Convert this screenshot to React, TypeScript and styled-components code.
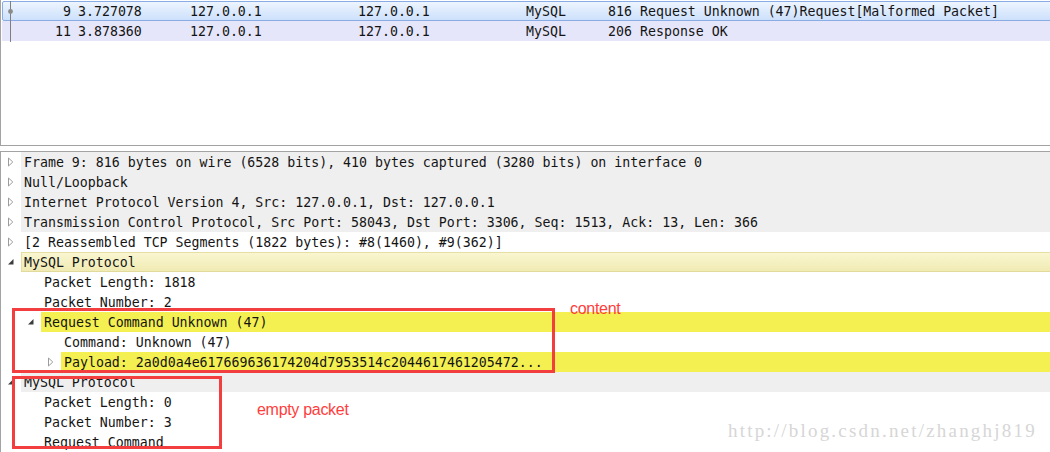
import React from 'react';
import styled, { createGlobalStyle, css } from 'styled-components';

const GlobalStyle = createGlobalStyle`
  html, body { margin: 0; padding: 0; background: #ffffff; }
  body { width: 1050px; height: 452px; overflow: hidden; }
`;

const MONO = `"DejaVu Sans Mono", "Liberation Mono", monospace`;

const Page = styled.div`
  position: relative;
  width: 1050px;
  height: 452px;
  overflow: hidden;
  background: #ffffff;
  font-family: ${MONO};
  color: #141414;
`;

/* ---------- packet list ---------- */

const PacketList = styled.section`
  box-sizing: border-box;
  height: 146px;
  border-left: 1px solid #a3a3a3;
  border-bottom: 1px solid #a3a3a3;
  padding: 1px 0 0 1px;
  overflow: hidden;
`;

const PacketRow = styled.div<{ $selected?: boolean }>`
  box-sizing: border-box;
  height: 20px;
  margin-right: -6px;
  display: grid;
  grid-template-columns: 14px 54px 119px 168px 168px 82px 32px 1fr;
  align-items: center;
  border: 1px solid transparent;
  font-size: 13.25px;
  white-space: pre;
  ${(p) =>
    p.$selected
      ? css`
          background: linear-gradient(#edf5ff, #cde0fb);
          border-color: #89ace4;
          border-radius: 2px;
        `
      : css`
          background: #e6e6fa;
        `}
`;

const Cell = styled.span<{ $right?: boolean; $pad?: number }>`
  display: block;
  overflow: hidden;
  text-align: ${(p) => (p.$right ? 'right' : 'left')};
  padding-left: ${(p) => p.$pad ?? 0}px;
`;

const RelatedMark = styled.svg`
  display: block;
  width: 14px;
  height: 21px;
  margin: -1px 0 -2px;
`;

function Related({ dot }: { dot?: boolean }) {
  return (
    <RelatedMark viewBox="0 0 14 21">
      <line x1="7.5" y1="0" x2="7.5" y2="21" stroke="#7f7f7f" strokeWidth="1" />
      {dot && <circle cx="7.5" cy="10.5" r="2.4" fill="#8a8a8a" />}
    </RelatedMark>
  );
}

type Packet = {
  no: string;
  time: string;
  src: string;
  dst: string;
  proto: string;
  len: string;
  info: string;
  selected?: boolean;
};

const packets: Packet[] = [
  {
    no: '9',
    time: '3.727078',
    src: '127.0.0.1',
    dst: '127.0.0.1',
    proto: 'MySQL',
    len: '816',
    info: 'Request Unknown (47)Request[Malformed Packet]',
    selected: true,
  },
  {
    no: '11',
    time: '3.878360',
    src: '127.0.0.1',
    dst: '127.0.0.1',
    proto: 'MySQL',
    len: '206',
    info: 'Response OK',
  },
];

const Splitter = styled.div`
  height: 5px;
  background: #ffffff;
`;

/* ---------- packet details tree ---------- */

type Tone = 'plain' | 'gray' | 'pale' | 'yellow';

const DetailPane = styled.section`
  border-top: 1px solid #a3a3a3;
  border-left: 1px solid #a3a3a3;
  font-size: 13.25px;
`;

const TreeRow = styled.div<{ $level: number }>`
  display: flex;
  height: 20px;
  padding-left: ${(p) => p.$level * 20}px;
`;

const Toggle = styled.span`
  flex: none;
  width: 20px;
  display: flex;
  align-items: center;
  justify-content: center;
`;

const toneStyles: Record<Tone, ReturnType<typeof css>> = {
  plain: css`
    background: transparent;
  `,
  gray: css`
    background: #efefef;
  `,
  pale: css`
    background: linear-gradient(#faf7d2, #f0eab2);
    box-shadow: inset 0 1px 0 #e6dfa4, inset 0 -1px 0 #e2da9a, inset 1px 0 0 #e6dfa4;
  `,
  yellow: css`
    background: #f4f051;
  `,
};

const Label = styled.div<{ $tone: Tone }>`
  flex: 1;
  display: flex;
  align-items: center;
  padding-left: 3px;
  white-space: pre;
  ${(p) => toneStyles[p.$tone]}
`;

const ArrowSvg = styled.svg`
  display: block;
`;

function CollapsedArrow() {
  return (
    <ArrowSvg width="6" height="10" viewBox="0 0 6 10">
      <polygon points="0.5,1 4.8,5 0.5,9" fill="#ffffff" stroke="#9c9c9c" strokeWidth="1" />
    </ArrowSvg>
  );
}

function ExpandedArrow() {
  return (
    <ArrowSvg width="6" height="10" viewBox="0 0 6 10">
      <polygon points="5.5,2 5.5,7.5 0,7.5" fill="#3c3c3c" />
    </ArrowSvg>
  );
}

type Node = {
  level: number;
  text: string;
  tone: Tone;
  arrow?: 'open' | 'closed';
};

const nodes: Node[] = [
  {
    level: 0,
    arrow: 'closed',
    tone: 'gray',
    text: 'Frame 9: 816 bytes on wire (6528 bits), 410 bytes captured (3280 bits) on interface 0',
  },
  { level: 0, arrow: 'closed', tone: 'gray', text: 'Null/Loopback' },
  {
    level: 0,
    arrow: 'closed',
    tone: 'gray',
    text: 'Internet Protocol Version 4, Src: 127.0.0.1, Dst: 127.0.0.1',
  },
  {
    level: 0,
    arrow: 'closed',
    tone: 'gray',
    text: 'Transmission Control Protocol, Src Port: 58043, Dst Port: 3306, Seq: 1513, Ack: 13, Len: 366',
  },
  {
    level: 0,
    arrow: 'closed',
    tone: 'plain',
    text: '[2 Reassembled TCP Segments (1822 bytes): #8(1460), #9(362)]',
  },
  { level: 0, arrow: 'open', tone: 'pale', text: 'MySQL Protocol' },
  { level: 1, tone: 'plain', text: 'Packet Length: 1818' },
  { level: 1, tone: 'plain', text: 'Packet Number: 2' },
  { level: 1, arrow: 'open', tone: 'yellow', text: 'Request Command Unknown (47)' },
  { level: 2, tone: 'plain', text: 'Command: Unknown (47)' },
  {
    level: 2,
    arrow: 'closed',
    tone: 'yellow',
    text: 'Payload: 2a0d0a4e617669636174204d7953514c2044617461205472...',
  },
  { level: 0, arrow: 'open', tone: 'gray', text: 'MySQL Protocol' },
  { level: 1, tone: 'plain', text: 'Packet Length: 0' },
  { level: 1, tone: 'plain', text: 'Packet Number: 3' },
  { level: 1, tone: 'plain', text: 'Request Command' },
];

/* ---------- annotations (drawn over the screenshot) ---------- */

const Callout = styled.div<{ $x: number; $y: number; $w: number; $h: number }>`
  position: absolute;
  box-sizing: border-box;
  left: ${(p) => p.$x}px;
  top: ${(p) => p.$y}px;
  width: ${(p) => p.$w}px;
  height: ${(p) => p.$h}px;
  border: 3px solid #f23e3e;
  pointer-events: none;
`;

const Note = styled.span<{ $x: number; $y: number }>`
  position: absolute;
  left: ${(p) => p.$x}px;
  top: ${(p) => p.$y}px;
  font-family: "Liberation Sans", Arial, sans-serif;
  font-size: 16px;
  line-height: 16px;
  letter-spacing: -0.3px;
  color: #ff3d3d;
  white-space: nowrap;
`;

const Watermark = styled.span`
  position: absolute;
  left: 728px;
  top: 421px;
  font-family: "Liberation Serif", "Times New Roman", serif;
  font-size: 19px;
  line-height: 20px;
  letter-spacing: 2.2px;
  color: #d6d6d6;
  white-space: nowrap;
`;

export default function App() {
  return (
    <Page>
      <GlobalStyle />
      <PacketList>
        {packets.map((p) => (
          <PacketRow key={p.no} $selected={p.selected}>
            <Related dot={p.selected} />
            <Cell $right>{p.no}</Cell>
            <Cell $pad={7}>{p.time}</Cell>
            <Cell>{p.src}</Cell>
            <Cell>{p.dst}</Cell>
            <Cell>{p.proto}</Cell>
            <Cell>{p.len}</Cell>
            <Cell>{p.info}</Cell>
          </PacketRow>
        ))}
      </PacketList>
      <Splitter />
      <DetailPane>
        {nodes.map((n, i) => (
          <TreeRow key={i} $level={n.level}>
            <Toggle>
              {n.arrow === 'closed' && <CollapsedArrow />}
              {n.arrow === 'open' && <ExpandedArrow />}
            </Toggle>
            <Label $tone={n.tone}>{n.text}</Label>
          </TreeRow>
        ))}
      </DetailPane>

      <Callout $x={12} $y={308} $w={543} $h={65} />
      <Note $x={570} $y={301}>content</Note>
      <Callout $x={12} $y={376} $w={210} $h={73} />
      <Note $x={257} $y={402}>empty packet</Note>
      <Watermark>http://blog.csdn.net/zhanghj819</Watermark>
    </Page>
  );
}
